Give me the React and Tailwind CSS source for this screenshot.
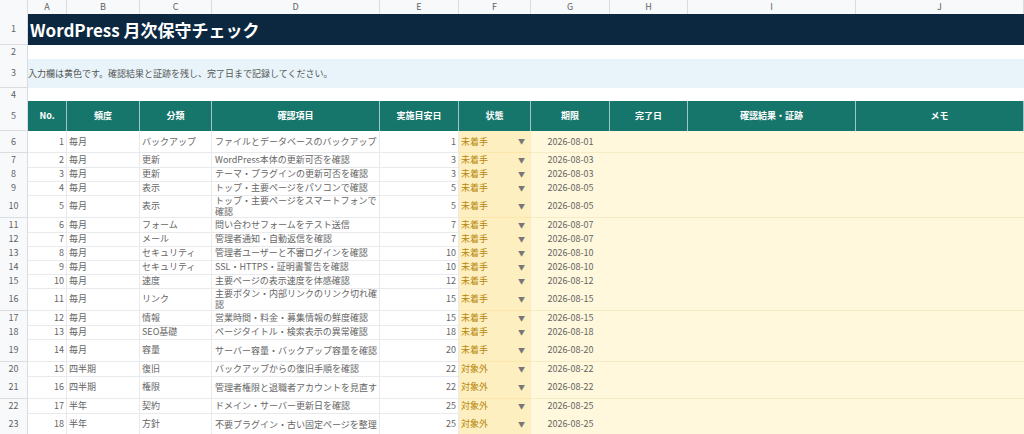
const cols = "grid-cols-[28px_39px_73px_72px_168px_79px_72px_79px_78px_168px_168px]";
const rows = [
  [1,"毎月","バックアップ","ファイルとデータベースのバックアップ",1,"未着手","2026-08-01",22],
  [2,"毎月","更新","WordPress本体の更新可否を確認",3,"未着手","2026-08-03",14],
  [3,"毎月","更新","テーマ・プラグインの更新可否を確認",3,"未着手","2026-08-03",14],
  [4,"毎月","表示","トップ・主要ページをパソコンで確認",5,"未着手","2026-08-05",14],
  [5,"毎月","表示","トップ・主要ページをスマートフォンで確認",5,"未着手","2026-08-05",23],
  [6,"毎月","フォーム","問い合わせフォームをテスト送信",7,"未着手","2026-08-07",14],
  [7,"毎月","メール","管理者通知・自動返信を確認",7,"未着手","2026-08-07",14],
  [8,"毎月","セキュリティ","管理者ユーザーと不審ログインを確認",10,"未着手","2026-08-10",14],
  [9,"毎月","セキュリティ","SSL・HTTPS・証明書警告を確認",10,"未着手","2026-08-10",14],
  [10,"毎月","速度","主要ページの表示速度を体感確認",12,"未着手","2026-08-12",14],
  [11,"毎月","リンク","主要ボタン・内部リンクのリンク切れ確認",15,"未着手","2026-08-15",23],
  [12,"毎月","情報","営業時間・料金・募集情報の鮮度確認",15,"未着手","2026-08-15",14],
  [13,"毎月","SEO基礎","ページタイトル・検索表示の異常確認",18,"未着手","2026-08-18",14],
  [14,"毎月","容量","サーバー容量・バックアップ容量を確認",20,"未着手","2026-08-20",23],
  [15,"四半期","復旧","バックアップからの復旧手順を確認",22,"対象外","2026-08-22",14],
  [16,"四半期","権限","管理者権限と退職者アカウントを見直す",22,"対象外","2026-08-22",23],
  [17,"半年","契約","ドメイン・サーバー更新日を確認",25,"対象外","2026-08-25",14],
  [18,"半年","方針","不要プラグイン・古い固定ページを整理",25,"対象外","2026-08-25",23],
];
const rh = "bg-[#f8f9fa] border-r border-b border-[#dadce0] flex items-center justify-center text-[#5f6368]";
const cell = "border-r border-b border-[#e8eaed] px-[2px] overflow-hidden";
export default function App() {
  return (
    <div className="w-[1024px] h-[434px] overflow-hidden bg-white text-[9px] text-[#666]" style={{fontFamily:'"Noto Sans CJK JP","Noto Sans",sans-serif'}}>
      <div className={`grid ${cols} h-[14px]`}>
        <div className={rh}></div>
        {["A","B","C","D","E","F","G","H","I","J"].map(c=>(<div key={c} className={rh}>{c}</div>))}
      </div>
      <div className={`grid ${cols} h-[31px]`}>
        <div className={rh}>1</div>
        <div className="col-span-10 bg-[#0c2840] text-white font-bold text-[17px] flex items-center pl-[2px]">WordPress 月次保守チェック</div>
      </div>
      <div className={`grid ${cols} h-[14px]`}><div className={rh}>2</div><div className="col-span-10"></div></div>
      <div className={`grid ${cols} h-[29px]`}>
        <div className={rh}>3</div>
        <div className="col-span-10 bg-[#e8f4fa] flex items-center text-[9px] text-[#555]">入力欄は黄色です。確認結果と証跡を残し、完了日まで記録してください。</div>
      </div>
      <div className={`grid ${cols} h-[13px]`}><div className={rh}>4</div><div className="col-span-10"></div></div>
      <div className={`grid ${cols} h-[30px]`}>
        <div className={rh}>5</div>
        {["No.","頻度","分類","確認項目","実施目安日","状態","期限","完了日","確認結果・証跡","メモ"].map(h=>(
          <div key={h} className="bg-[#17766b] text-white font-bold flex items-center justify-center border-r border-[#9cc9c2]">{h}</div>
        ))}
      </div>
      {rows.map((r,i)=>(
        <div key={i} className={`grid ${cols}`} style={{height:r[7]}}>
          <div className={rh}>{i+6}</div>
          <div className={`${cell} flex items-center justify-end`}>{r[0]}</div>
          <div className={`${cell} flex items-center`}>{r[1]}</div>
          <div className={`${cell} flex items-center`}>{r[2]}</div>
          <div className={`${cell} flex items-center leading-[11px] pl-[3px]`}>{r[3]}</div>
          <div className={`${cell} flex items-center justify-end`}>{r[4]}</div>
          <div className="bg-[#fdefc0] border-b border-[#fbe7a8] flex items-center justify-between px-[2px] text-[#b8860b]"><span>{r[5]}</span><span className="text-[7px] text-[#777] mr-[4px]">▼</span></div>
          <div className="bg-[#fff8dc] border-b border-[#f5ecc6] flex items-center justify-center">{r[6]}</div>
          <div className="bg-[#fff8dc] border-b border-[#f5ecc6]"></div>
          <div className="bg-[#fff8dc] border-b border-[#f5ecc6]"></div>
          <div className="bg-[#fff8dc] border-b border-[#f5ecc6]"></div>
        </div>
      ))}
    </div>
  );
}
